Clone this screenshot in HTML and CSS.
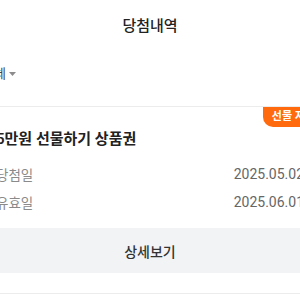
FILE: index.html
```html
<!DOCTYPE html>
<html lang="ko">
<head>
<meta charset="utf-8">
<link rel="stylesheet" href="styles.css">
</head>
<body>
<div class="page">
  <header class="header">당첨내역</header>
  <div class="filter">
    <span class="filter-label">전체</span>
    <svg class="caret" width="7" height="4" viewBox="0 0 7 4"><path d="M0 0H7L3.5 4Z" fill="#8c8c8c"/></svg>
  </div>
  <section class="card">
    <span class="badge">선물 지급</span>
    <h2 class="card-title">5만원 선물하기 상품권</h2>
    <div class="row row-first"><span class="label">당첨일</span><span class="value">2025.05.02</span></div>
    <div class="row"><span class="label">유효일</span><span class="value">2025.06.01</span></div>
    <button class="detail-btn">상세보기</button>
  </section>
</div>
</body>
</html>
```

FILE: styles.css
```css
html, body {
  margin: 0;
  padding: 0;
  background: #fff;
}
body {
  width: 300px;
  height: 300px;
  overflow: hidden;
  font-family: Roboto, "Noto Sans CJK KR", sans-serif;
  color: #222;
}
.page {
  margin-left: -20px;
  width: 340px;
}
.header {
  height: 52px;
  line-height: 52px;
  text-align: center;
  font-size: 15px;
  font-weight: 500;
  color: #222;
}
.filter {
  display: flex;
  align-items: center;
  gap: 3px;
  padding: 12px 0 22px 2px;
  height: 20px;
  border-bottom: 1px solid #ececec;
}
.filter-label {
  font-size: 13px;
  line-height: 20px;
  color: #444;
}
.caret {
  display: block;
}
.card {
  position: relative;
  padding: 22px 16px 20px;
  border-bottom: 1px solid #ececec;
}
.badge {
  position: absolute;
  top: 0;
  right: -4px;
  height: 20px;
  line-height: 20px;
  padding: 0 9px;
  font-size: 11px;
  font-weight: 700;
  color: #fff;
  background: #ff6a0e;
  border-bottom-left-radius: 10px;
}
.card-title {
  margin: 0;
  font-size: 15px;
  line-height: 20px;
  font-weight: 600;
  color: #222;
}
.row {
  display: flex;
  justify-content: space-between;
  align-items: center;
  height: 20px;
  margin-top: 8px;
}
.row-first {
  margin-top: 15px;
}
.label {
  font-size: 13.5px;
  color: #8a8a8a;
}
.value {
  font-size: 14px;
  color: #666;
}
.detail-btn {
  display: block;
  width: 100%;
  height: 45px;
  margin-top: 16px;
  border: 0;
  border-radius: 4px;
  background: #f2f3f5;
  font-family: Roboto, "Noto Sans CJK KR", sans-serif;
  font-size: 14px;
  font-weight: 500;
  color: #333;
  padding: 0;
}
```
